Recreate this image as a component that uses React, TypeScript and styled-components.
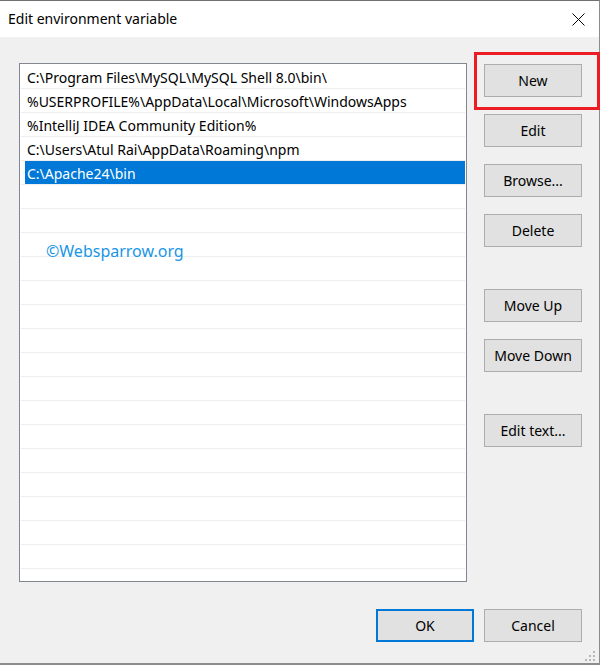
import React from "react";
import styled, { createGlobalStyle } from "styled-components";

const GlobalStyle = createGlobalStyle`
  html, body {
    margin: 0;
    padding: 0;
    background: #ffffff;
  }
  body {
    font-family: "Noto Sans", "Open Sans", sans-serif;
    color: #000;
  }
  * { box-sizing: border-box; }
`;

const Window = styled.div`
  position: relative;
  width: 600px;
  height: 665px;
  background: #f0f0f0;
  border-top: 1px solid #707070;
  border-right: 1px solid #8c8c8c;
  border-bottom: 2px solid #8c8c8c;
  display: flex;
  flex-direction: column;
`;

const TitleBar = styled.div`
  height: 36px;
  flex: none;
  background: #ffffff;
  display: flex;
  align-items: center;
  justify-content: space-between;
  padding: 0 14px 0 8px;
`;

const Title = styled.span`
  font-size: 14px;
  line-height: 20px;
`;

const CloseButton = styled.button`
  width: 14px;
  height: 14px;
  padding: 0;
  border: none;
  background: transparent;
  display: flex;
  align-items: center;
  justify-content: center;
  cursor: default;
`;

const Content = styled.div`
  flex: 1;
  display: grid;
  grid-template-columns: 448px 98px;
  grid-template-rows: 519px auto;
  column-gap: 17px;
  row-gap: 27px;
  padding: 26px 0 0 19px;
`;

const List = styled.div`
  position: relative;
  background: #ffffff;
  border: 1px solid #828790;
  padding-top: 1px;
  overflow: hidden;
`;

const Row = styled.div`
  height: 24px;
  margin: 0 1px;
  border-bottom: 1px solid #eeeeee;
  display: flex;
`;

const Cell = styled.div<{ $selected?: boolean }>`
  flex: 1;
  margin-left: 4px;
  padding-left: 2px;
  padding-top: 1px;
  display: flex;
  align-items: center;
  font-size: 14px;
  white-space: nowrap;
  background: ${(p) => (p.$selected ? "#0078d7" : "transparent")};
  color: ${(p) => (p.$selected ? "#ffffff" : "#000000")};
`;

const Watermark = styled.div`
  position: absolute;
  left: 26px;
  top: 177px;
  font-size: 16px;
  line-height: 20px;
  color: #1a96e6;
  pointer-events: none;
`;

const ButtonColumn = styled.div`
  display: flex;
  flex-direction: column;
  gap: 17px;
  padding-top: 1px;
`;

const Button = styled.button<{ $spaced?: boolean; $default?: boolean }>`
  width: 98px;
  height: 33px;
  margin-top: ${(p) => (p.$spaced ? "25px" : "0")};
  background: #e1e1e1;
  border: ${(p) => (p.$default ? "2px solid #0078d7" : "1px solid #adadad")};
  font-family: "Noto Sans", "Open Sans", sans-serif;
  font-size: 14px;
  color: #000;
  padding: 0 0 1px;
  cursor: default;
`;

const Highlight = styled.div`
  position: relative;
  width: 98px;
  height: 33px;
  &::after {
    content: "";
    position: absolute;
    left: -10px;
    top: -12px;
    width: 120px;
    height: 52px;
    border: 3px solid #ed1c24;
    pointer-events: none;
  }
`;

const Footer = styled.div`
  grid-column: 1 / -1;
  display: flex;
  justify-content: flex-end;
  gap: 10px;
`;

const Grip = styled.svg`
  position: absolute;
  right: 3px;
  bottom: 1px;
`;

const entries = [
  "C:\\Program Files\\MySQL\\MySQL Shell 8.0\\bin\\",
  "%USERPROFILE%\\AppData\\Local\\Microsoft\\WindowsApps",
  "%IntelliJ IDEA Community Edition%",
  "C:\\Users\\Atul Rai\\AppData\\Roaming\\npm",
  "C:\\Apache24\\bin",
];

const TOTAL_ROWS = 22;

export default function App() {
  const rows = Array.from({ length: TOTAL_ROWS }, (_, i) => entries[i] ?? "");
  return (
    <>
      <GlobalStyle />
      <Window>
        <TitleBar>
          <Title>Edit environment variable</Title>
          <CloseButton aria-label="Close">
            <svg width="13" height="13" viewBox="0 0 13 13">
              <path d="M0.5 0.5 L12.5 12.5 M12.5 0.5 L0.5 12.5" stroke="#000" strokeWidth="1" fill="none" />
            </svg>
          </CloseButton>
        </TitleBar>
        <Content>
          <List>
            {rows.map((text, i) => (
              <Row key={i}>
                <Cell $selected={i === 4}>{text}</Cell>
              </Row>
            ))}
            <Watermark>©Websparrow.org</Watermark>
          </List>
          <ButtonColumn>
            <Highlight>
              <Button>New</Button>
            </Highlight>
            <Button>Edit</Button>
            <Button>Browse...</Button>
            <Button>Delete</Button>
            <Button $spaced>Move Up</Button>
            <Button>Move Down</Button>
            <Button $spaced>Edit text...</Button>
          </ButtonColumn>
          <Footer>
            <Button $default>OK</Button>
            <Button>Cancel</Button>
          </Footer>
        </Content>
        <Grip width="12" height="12" viewBox="0 0 12 12">
          <rect x="9" y="1" width="2" height="2" fill="#b8b8b8" />
          <rect x="5" y="5" width="2" height="2" fill="#b8b8b8" />
          <rect x="9" y="5" width="2" height="2" fill="#b8b8b8" />
          <rect x="1" y="9" width="2" height="2" fill="#b8b8b8" />
          <rect x="5" y="9" width="2" height="2" fill="#b8b8b8" />
          <rect x="9" y="9" width="2" height="2" fill="#b8b8b8" />
        </Grip>
      </Window>
    </>
  );
}
